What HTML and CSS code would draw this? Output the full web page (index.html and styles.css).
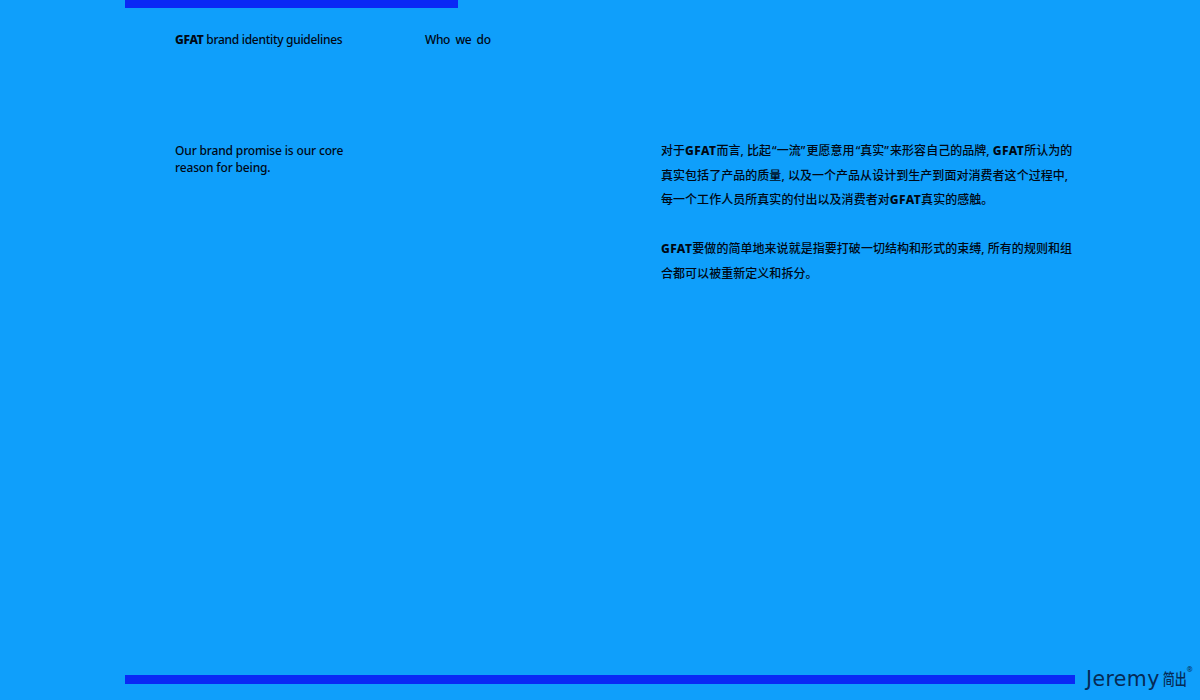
FILE: index.html
```html
<!DOCTYPE html>
<html lang="zh">
<head>
<meta charset="utf-8">
<title>GFAT brand identity guidelines</title>
<link rel="stylesheet" href="styles.css">
</head>
<body>
<div class="page">
  <div class="top-bar"></div>
  <header class="head">
    <div class="doc-title"><b>GFAT</b> brand identity guidelines</div>
    <div class="section-title">Who&nbsp; we&nbsp; do</div>
  </header>
  <main class="content">
    <p class="promise">Our brand promise is our core<br>reason for being.</p>
    <div class="body-copy">
      <p>对于<b>GFAT</b>而言, 比起<span class="quote">“一流”</span>更愿意用<span class="quote">“真实”</span>来形容自己的品牌, <b>GFAT</b>所认为的<br>真实包括了产品的质量, 以及一个产品从设计到生产到面对消费者这个过程中,<br>每一个工作人员所真实的付出以及消费者对<b>GFAT</b>真实的感触。</p>
      <p><b>GFAT</b>要做的简单地来说就是指要打破一切结构和形式的束缚, 所有的规则和组<br>合都可以被重新定义和拆分。</p>
    </div>
  </main>
  <footer class="foot">
    <div class="bottom-bar"></div>
    <div class="logo"><span class="logo-en">Jeremy</span><span class="logo-cn">简出</span><sup class="logo-r">®</sup></div>
  </footer>
</div>
</body>
</html>
```
FILE: styles.css
```css
* { box-sizing: border-box; }
html, body { margin: 0; padding: 0; }
body {
  background: #0f9ffb;
  color: #000814;
  font-family: "Noto Sans", "Noto Sans CJK SC", sans-serif;
  font-size: 12px;
  font-weight: 500;
}
b { font-weight: 800; }
.page {
  width: 1200px;
  height: 700px;
  display: flex;
  flex-direction: column;
  overflow: hidden;
}
.top-bar {
  width: 333px;
  height: 8px;
  margin-left: 125px;
  background: #0a28f5;
}
.head {
  display: flex;
  margin-top: 23px;
  padding-left: 175px;
  line-height: 17px;
}
.doc-title {
  width: 250px;
  letter-spacing: -0.3px;
}
.section-title { letter-spacing: -0.4px; }
.content {
  display: flex;
  flex: 1;
  margin-top: 94px;
  padding-left: 175px;
}
.promise {
  width: 486px;
  margin: 0;
  line-height: 17px;
  letter-spacing: -0.15px;
}
.body-copy {
  font-size: 12px;
  line-height: 24.6px;
  letter-spacing: 0.04px;
  margin-top: -3px;
  white-space: nowrap;
}
.body-copy p { margin: 0 0 24.6px; }
.body-copy b { letter-spacing: 0.4px; }
.quote { padding: 0 1px; }
.foot {
  display: flex;
  align-items: center;
  height: 34px;
  padding-left: 125px;
  padding-bottom: 8px;
}
.bottom-bar {
  width: 950px;
  height: 9px;
  background: #0a28f5;
}
.logo {
  display: flex;
  align-items: flex-start;
  margin-left: 11px;
  color: #062a55;
  line-height: 18px;
}
.logo-en {
  font-family: "DejaVu Sans", sans-serif;
  font-size: 20.5px;
  font-weight: 400;
  letter-spacing: 0.4px;
}
.logo-cn {
  display: inline-block;
  font-family: "Noto Sans CJK SC", sans-serif;
  font-size: 12px;
  font-weight: 500;
  margin-left: 3px;
  transform: scaleY(1.3);
}
.logo-r {
  font-size: 7px;
  line-height: 8px;
  margin: -4px 0 0 0;
}
```
